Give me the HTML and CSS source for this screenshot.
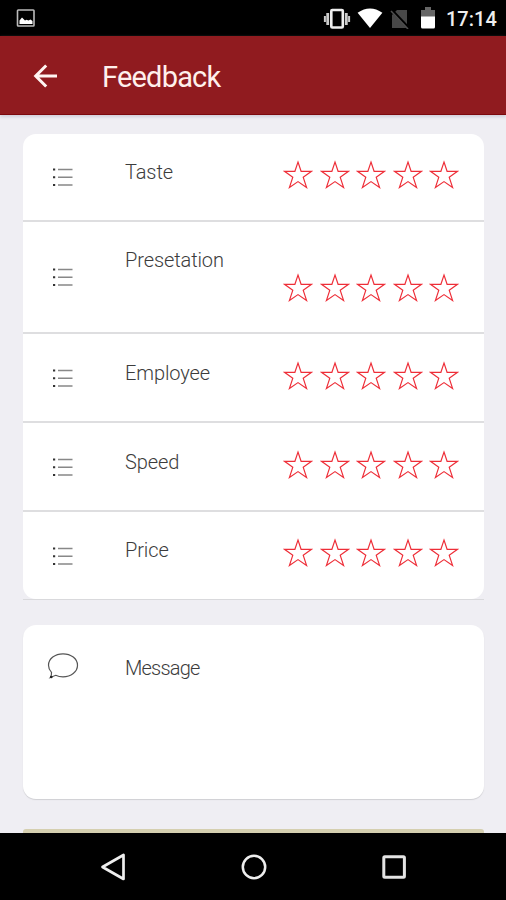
FILE: index.html
```html
<!DOCTYPE html>
<html lang="en">
<head>
  <meta charset="UTF-8">
  <title>Feedback</title>
  <link rel="stylesheet" href="styles.css">
</head>
<body>
  <!-- Shared icons -->
  <svg class="sprite" width="0" height="0">
    <symbol id="list" viewBox="0 0 22 20">
      <path d="M6 2.500h14.500M6 10.200h14.500M6 18h14.500" stroke="#888" stroke-width="1.400"/>
      <path d="M1 2.500h2.200M1 10.200h2.200M1 18h2.200" stroke="#333" stroke-width="2"/>
    </symbol>
    <symbol id="star" viewBox="0 0 30 29">
      <path d="M15 2l3.100 9.300h10.400l-8.300 6 3.400 10.200L15 21.600l-8.600 5.900 3.400-10.200-8.300-6h10.400z" fill="none" stroke="#ee2e38" stroke-width="1.150"/>
    </symbol>
  </svg>

  <div class="screen">
    <div class="status-bar">
      <svg class="picture" width="20" height="20" viewBox="0 0 20 20">
        <rect x="1.500" y="1" width="16.500" height="16" rx="0.800" fill="none" stroke="#bbb" stroke-width="1.600"/>
        <path d="M3.500 15v-3.500l2.500-3 3 3 1.500-.8 2 .8 2-1 2 1.500v3z" fill="#fff"/>
      </svg>
      <svg class="vibrate" width="28" height="22" viewBox="0 0 28 22">
        <rect x="8.300" y="2" width="11.500" height="17.500" rx="1" fill="none" stroke="#eee" stroke-width="2.600"/>
        <path d="M4.700 5v12M23.300 5v12" stroke="#ccc" stroke-width="2.800"/>
        <path d="M1.900 8v6M26.100 8v6" stroke="#ccc" stroke-width="2"/>
      </svg>
      <svg class="wifi" width="26" height="20" viewBox="0 0 26 20">
        <path d="M13 20L.6 4.800Q13-3.800 25.400 4.800z" fill="#fff"/>
      </svg>
      <svg class="no-sim" width="20" height="20" viewBox="0 0 20 20">
        <path d="M7 1h10v18H2V6z" fill="#484848"/>
        <path d="M2 1.500l17 18" stroke="#000" stroke-width="3"/>
        <path d="M1 2l17 18" stroke="#505050" stroke-width="1.500"/>
      </svg>
      <svg class="battery" width="14" height="22" viewBox="0 0 14 22">
        <path d="M0 3h4V0h6v3h4v7H0z" fill="#666"/>
        <path d="M0 9.500h14V20q0 1.500-1.500 1.500h-11Q0 21.500 0 20z" fill="#fff"/>
      </svg>
      <span class="clock">17:14</span>
    </div>

    <div class="header">
      <svg width="26" height="26" viewBox="0 0 26 26">
        <path d="M24 13H3M13.200 2.500L2.700 13l10.500 10.500" fill="none" stroke="#fff5f2" stroke-width="3"/>
      </svg>
      <h1>Feedback</h1>
    </div>

    <div class="content">
      <!-- Ratings -->
      <div class="card">
        <div class="row">
          <svg class="list-icon"><use href="#list"/></svg>
          <span class="label">Taste</span>
          <div class="stars">
            <svg><use href="#star"/></svg><svg><use href="#star"/></svg><svg><use href="#star"/></svg><svg><use href="#star"/></svg><svg><use href="#star"/></svg>
          </div>
        </div>
        <div class="row tall">
          <svg class="list-icon"><use href="#list"/></svg>
          <span class="label">Presetation</span>
          <div class="stars">
            <svg><use href="#star"/></svg><svg><use href="#star"/></svg><svg><use href="#star"/></svg><svg><use href="#star"/></svg><svg><use href="#star"/></svg>
          </div>
        </div>
        <div class="row">
          <svg class="list-icon"><use href="#list"/></svg>
          <span class="label">Employee</span>
          <div class="stars">
            <svg><use href="#star"/></svg><svg><use href="#star"/></svg><svg><use href="#star"/></svg><svg><use href="#star"/></svg><svg><use href="#star"/></svg>
          </div>
        </div>
        <div class="row">
          <svg class="list-icon"><use href="#list"/></svg>
          <span class="label">Speed</span>
          <div class="stars">
            <svg><use href="#star"/></svg><svg><use href="#star"/></svg><svg><use href="#star"/></svg><svg><use href="#star"/></svg><svg><use href="#star"/></svg>
          </div>
        </div>
        <div class="row">
          <svg class="list-icon"><use href="#list"/></svg>
          <span class="label">Price</span>
          <div class="stars">
            <svg><use href="#star"/></svg><svg><use href="#star"/></svg><svg><use href="#star"/></svg><svg><use href="#star"/></svg><svg><use href="#star"/></svg>
          </div>
        </div>
      </div>
      <div class="divider"></div>

      <!-- Message -->
      <div class="card message">
        <svg width="32" height="28" viewBox="0 0 32 28">
          <path d="M4.500 20.300C2.500 18.300 1.500 16 1.500 13.300 1.500 6.700 8 1.800 16 1.800s14.500 4.900 14.500 11.500S24 24.900 16 24.900c-2.800 0-5.200-.6-7.300-1.600L3.300 25.500c1-1.400 1.400-3.200 1.200-5.200z" fill="none" stroke="#555" stroke-width="1.200"/>
          <circle cx="4.300" cy="25" r="1.300" fill="#222"/>
        </svg>
        <span class="label">Message</span>
      </div>

      <div class="submit"></div>
    </div>

    <div class="nav-bar">
      <svg width="28" height="30" viewBox="0 0 28 30">
        <path d="M24.500 3v24L3.500 15z" fill="none" stroke="#eee" stroke-width="2.700" stroke-linejoin="round"/>
      </svg>
      <svg width="28" height="30" viewBox="0 0 28 30">
        <circle cx="14" cy="15" r="11.200" fill="none" stroke="#eee" stroke-width="2.500"/>
      </svg>
      <svg width="28" height="30" viewBox="0 0 28 30">
        <rect x="3.800" y="4.800" width="20.600" height="20.400" rx="1" fill="none" stroke="#e4e4e4" stroke-width="3"/>
      </svg>
    </div>
  </div>
</body>
</html>
```
FILE: styles.css
```css
body {
  margin: 0;
  font-family: Roboto, sans-serif;
  background-color: #efeef3;
}
.sprite {
  display: block;
}
.screen {
  display: flex;
  flex-direction: column;
  height: 900px;
  overflow: hidden;
}
.status-bar {
  display: flex;
  align-items: center;
  flex: none;
  box-sizing: border-box;
  height: 36px;
  padding: 1px 10px 0 16px;
  background-color: #000;
}
.vibrate {
  margin-left: auto;
}
.wifi {
  margin: -2px 7px 0 6px;
}
.battery {
  margin: -1px 11px 0 11px;
}
.clock {
  width: 50px;
  color: #eee;
  font-size: 20px;
  font-weight: 500;
  white-space: nowrap;
}
.header {
  display: flex;
  align-items: center;
  flex: none;
  box-sizing: border-box;
  height: 79px;
  padding: 2px 0 0 33px;
  background-color: #901b1f;
  border-bottom: 1px solid #7c080d;
  box-shadow: 0 2px 3px #cfced9;
}
h1 {
  margin: 2px 0 0 43px;
  color: #fff0ec;
  font-size: 29px;
  font-weight: 400;
  letter-spacing: -0.8px;
}
.content {
  flex: 1;
  min-height: 0;
  padding: 19px 22px 0 23px;
}
.card {
  background-color: #fff;
  border-radius: 13px;
}
.row {
  display: grid;
  grid-template-columns: 101px 1fr auto;
  box-sizing: border-box;
  height: 89px;
  padding: 1px 25px 0 0;
  border-bottom: 2px solid #dedee0;
}
.row:first-child {
  height: 88px;
  padding-top: 0;
}
.row:last-child {
  height: 87px;
  padding-top: 0;
  border-bottom: none;
}
.row.tall {
  height: 112px;
  padding-top: 0;
}
.list-icon {
  align-self: center;
  width: 22px;
  height: 20px;
  margin-left: 29px;
}
.label {
  color: #3c3c3c;
  font-size: 20px;
  font-weight: 300;
  line-height: 24px;
  letter-spacing: -0.1px;
}
.row .label {
  padding: 26px 0 0 1px;
}
.stars {
  display: flex;
  gap: 6.500px;
  padding-top: 26px;
}
.tall .stars {
  padding-top: 51px;
}
.stars svg {
  width: 30px;
  height: 29px;
}
.divider {
  height: 1px;
  background-color: #d9d9dc;
}
.message {
  display: flex;
  box-sizing: border-box;
  height: 174px;
  margin-top: 25px;
  padding: 27px 24px;
  box-shadow: 0 1px 1px #cfcfd3;
}
.message .label {
  margin: 4px 0 0 46px;
  letter-spacing: -0.800px;
}
.submit {
  height: 50px;
  margin-top: 30px;
  background-color: #d5cfb0;
  border-radius: 3px;
}
.nav-bar {
  display: flex;
  align-items: center;
  justify-content: center;
  gap: 112.500px;
  flex: none;
  height: 67px;
  padding-left: 1px;
  background-color: #000;
  z-index: 1;
}
```
